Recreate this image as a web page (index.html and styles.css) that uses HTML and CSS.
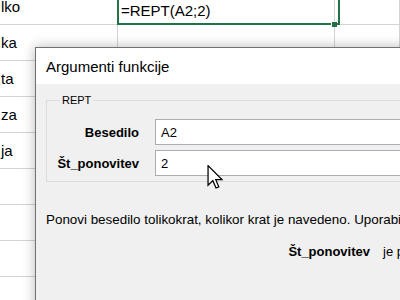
FILE: index.html
```html
<!DOCTYPE html>
<html lang="sl">

<head>
  <meta charset="UTF-8">
  <meta name="viewport" content="width=device-width, initial-scale=1.0">
  <title>Argumenti funkcije</title>
  <link rel="stylesheet" href="styles.css">
</head>

<body>
  <div class="sheet">
    <div class="cell">lko</div>
    <div class="cell active">=REPT(A2;2)</div>
    <div class="cell"></div>

    <div class="cell">ka</div>
    <div class="cell"></div>
    <div class="cell"></div>

    <div class="cell">ta</div>
    <div class="cell"></div>
    <div class="cell"></div>

    <div class="cell">za</div>
    <div class="cell"></div>
    <div class="cell"></div>

    <div class="cell">ja</div>
    <div class="cell"></div>
    <div class="cell"></div>

    <div class="cell"></div>
    <div class="cell"></div>
    <div class="cell"></div>

    <div class="cell"></div>
    <div class="cell"></div>
    <div class="cell"></div>

    <div class="cell"></div>
    <div class="cell"></div>
    <div class="cell"></div>

    <div class="cell"></div>
    <div class="cell"></div>
    <div class="cell"></div>
  </div>

  <div class="dialog">
    <div class="dialog-title">Argumenti funkcije</div>
    <div class="dialog-body">
      <fieldset class="group">
        <legend>REPT</legend>
        <div class="args">
          <label class="arg-label" for="besedilo">Besedilo</label>
          <input class="arg-input" type="text" id="besedilo" value="A2">
          <label class="arg-label" for="ponovitev">Št_ponovitev</label>
          <input class="arg-input" type="text" id="ponovitev" value="2">
        </div>
      </fieldset>

      <p class="desc">Ponovi besedilo tolikokrat, kolikor krat je navedeno. Uporabi REPT, da zapolnite celico s številnimi ponovitvami besedila.</p>

      <div class="arg-help">
        <span class="arg-help-name">Št_ponovitev</span>
        <span class="arg-help-text">je pozitivno število, ki določa, kolikokrat naj se besedilo ponovi.</span>
      </div>
    </div>
  </div>

  <!-- kazalec miške -->
  <svg class="cursor" width="16" height="24" viewBox="0 0 12 19">
    <path d="M0.5 0.5 L0.5 16 L4.3 12.4 L6.8 18.2 L9 17.3 L6.6 11.6 L11.5 11.6 Z" fill="#fff" stroke="#000" stroke-width="1" stroke-linejoin="miter"/>
  </svg>
</body>

</html>
```

FILE: styles.css
```css
* {
  box-sizing: border-box;
}

body {
  margin: 0;
  width: 400px;
  height: 300px;
  overflow: hidden;
  position: relative;
  background: #fff;
  color: #000;
  font-family: "Liberation Sans", Arial, sans-serif;
}

/* Excel mreža */
.sheet {
  display: grid;
  grid-template-columns: 118px 217px 1fr;
  grid-auto-rows: 36px;
  margin-top: -11px;
}

.cell {
  display: flex;
  align-items: flex-end;
  padding: 0 0 8px 1px;
  border-right: 1px solid #d4d4d4;
  border-bottom: 1px solid #d4d4d4;
  font-size: 15px;
  line-height: 18px;
  white-space: nowrap;
  overflow: hidden;
}

.cell.active {
  position: relative;
  overflow: visible;
  padding: 0 0 4px 3px;
}

.cell.active::before {
  content: "";
  position: absolute;
  left: -1px;
  top: -2px;
  width: 219px;
  bottom: -1px;
  border: 2px solid #217346;
}

.cell.active::after {
  content: "";
  position: absolute;
  left: 214px;
  top: 33px;
  width: 5px;
  height: 5px;
  background: #217346;
  box-shadow: -1px 0 0 #fff;
}

/* Dialog */
.dialog {
  position: absolute;
  left: 35px;
  top: 47px;
  width: 480px;
  height: 300px;
  border: 1px solid #707070;
  background: #f0f0f0;
  box-shadow: 0 0 12px rgba(0, 0, 0, 0.28);
}

.dialog-title {
  height: 36px;
  display: flex;
  align-items: center;
  padding-left: 10px;
  background: #fff;
  font-size: 15px;
}

.dialog-body {
  padding: 10px 10px 0 10px;
  font-size: 13px;
}

.group {
  margin: 0;
  padding: 13px 0 5px 6px;
  border: 1px solid #dcdcdc;
}

.group legend {
  margin-left: 7px;
  padding: 0 2px;
  font-size: 11px;
  line-height: 12px;
}

.args {
  display: grid;
  grid-template-columns: 86px 1fr;
  column-gap: 16px;
  row-gap: 5px;
  align-items: center;
}

.arg-label {
  text-align: right;
  font-weight: bold;
  white-space: nowrap;
}

.arg-input {
  height: 26px;
  padding: 0 5px;
  border: 1px solid #abadb3;
  background: #fff;
  font-family: inherit;
  font-size: 13px;
  color: #000;
}

.desc {
  margin: 30px 0 0 0;
  font-size: 13.4px;
  line-height: 16px;
  white-space: nowrap;
}

.arg-help {
  display: grid;
  grid-template-columns: 324px 1fr;
  column-gap: 13px;
  margin-top: 16px;
  line-height: 16px;
  white-space: nowrap;
}

.arg-help-name {
  text-align: right;
  font-weight: bold;
}

.cursor {
  position: absolute;
  left: 207px;
  top: 165px;
}
```
